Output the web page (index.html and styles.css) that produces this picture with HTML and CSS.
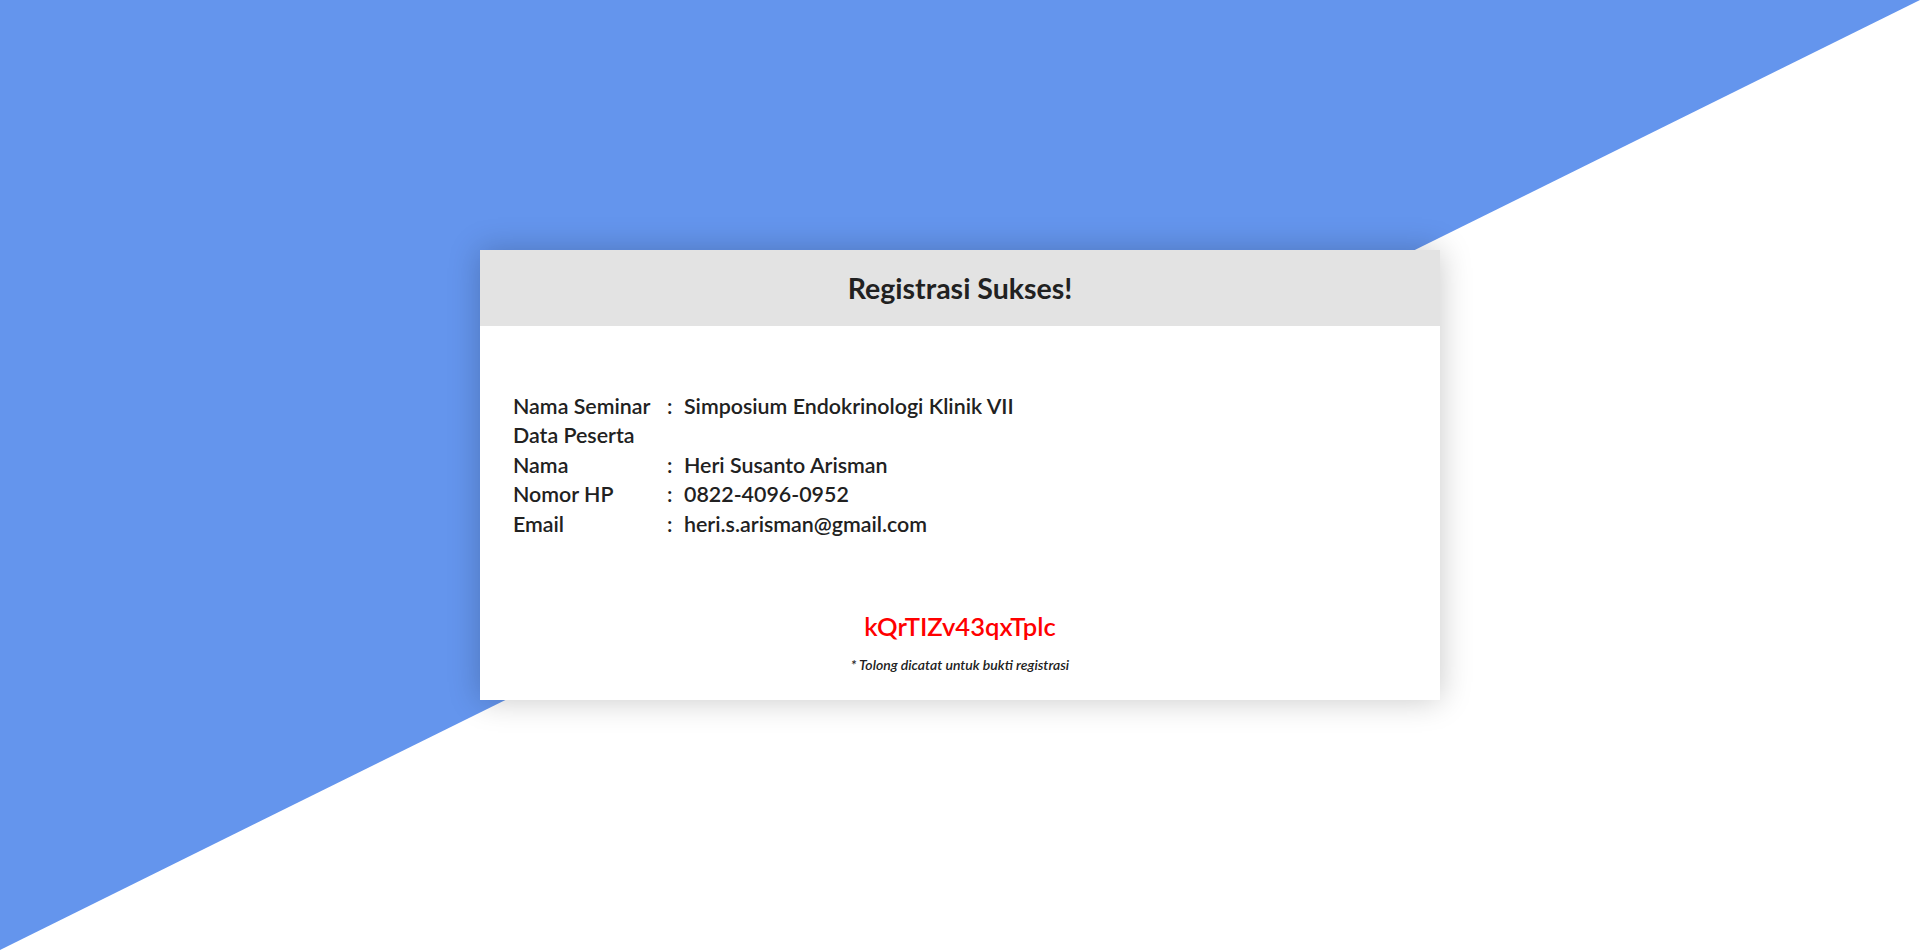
FILE: index.html
```html
<!DOCTYPE html>
<html lang="id">
<head>
<meta charset="utf-8">
<title>Registrasi Sukses</title>
<link rel="stylesheet" href="styles.css">
</head>
<body>
<div class="backdrop"></div>
<main class="stage">
  <section class="card">
    <header class="card-header">
      <h1 class="card-title">Registrasi Sukses!</h1>
    </header>
    <div class="card-body">
      <div class="details">
        <div class="row"><span class="label">Nama Seminar</span><span class="colon">:</span><span class="value">Simposium Endokrinologi Klinik VII</span></div>
        <div class="row"><span class="label section">Data Peserta</span></div>
        <div class="row"><span class="label">Nama</span><span class="colon">:</span><span class="value">Heri Susanto Arisman</span></div>
        <div class="row"><span class="label">Nomor HP</span><span class="colon">:</span><span class="value">0822-4096-0952</span></div>
        <div class="row"><span class="label">Email</span><span class="colon">:</span><span class="value">heri.s.arisman@gmail.com</span></div>
      </div>
      <div class="code">kQrTIZv43qxTplc</div>
      <p class="note">* Tolong dicatat untuk bukti registrasi</p>
    </div>
  </section>
</main>
</body>
</html>
```

FILE: styles.css
```css
html, body {
  margin: 0;
  padding: 0;
}
body {
  font-family: Lato, "Open Sans", sans-serif;
  color: #212121;
  background: #ffffff;
  height: 950px;
  overflow: hidden;
  position: relative;
}
.backdrop {
  position: absolute;
  inset: 0;
  background: #6495ed;
  clip-path: polygon(0 0, 100% 0, 0 100%);
}
.stage {
  position: relative;
  height: 950px;
  display: flex;
  align-items: center;
  justify-content: center;
}
.card {
  width: 960px;
  height: 450px;
  background: #ffffff;
  box-shadow: 0 0 30px rgba(0, 0, 0, 0.22);
  display: flex;
  flex-direction: column;
}
.card-header {
  height: 76px;
  background: #e3e3e3;
  display: flex;
  align-items: center;
  justify-content: center;
}
.card-title {
  margin: 0;
  font-size: 28.5px;
  font-weight: 700;
}
.card-body {
  padding: 66px 33px 0;
  display: flex;
  flex-direction: column;
}
.details {
  font-size: 21.4px;
  font-weight: 600;
  line-height: 29.4px;
}
.row {
  display: flex;
}
.label {
  width: 154px;
}
.colon {
  width: 17px;
}
.code {
  margin-top: 71px;
  text-align: center;
  color: #ff0000;
  font-size: 25.6px;
  font-weight: 600;
  line-height: 32px;
}
.note {
  margin: 14px 0 0;
  text-align: center;
  font-size: 14px;
  font-style: italic;
  font-weight: 600;
}
```
